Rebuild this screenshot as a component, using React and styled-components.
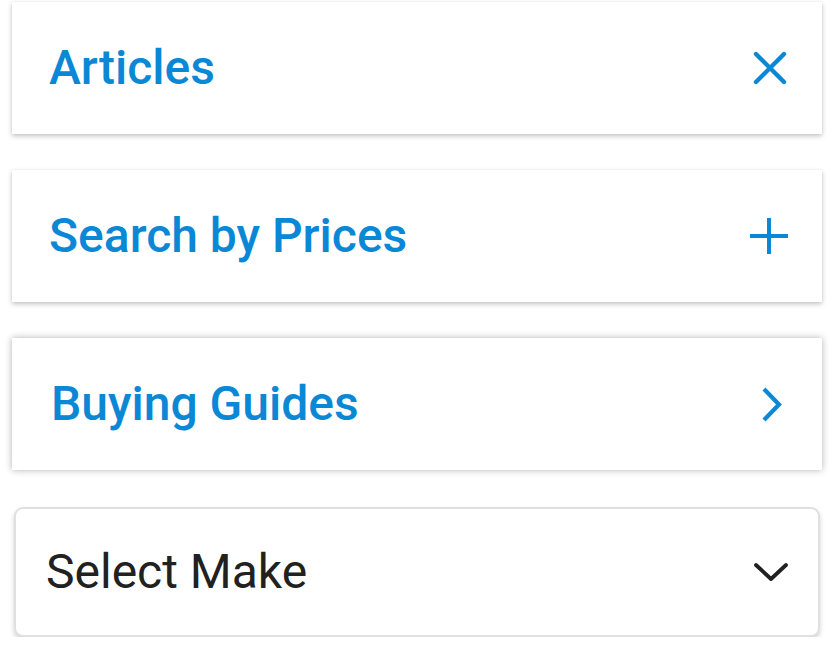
import React from "react";
import styled, { createGlobalStyle, css } from "styled-components";

const Global = createGlobalStyle`
  html, body { margin: 0; padding: 0; background: #ffffff; }
  body { font-family: Roboto, "Noto Sans", sans-serif; }
`;

const Stack = styled.div`
  display: flex;
  flex-direction: column;
  gap: 36px;
  padding: 2px 12px 0 12px;
  width: 810px;
`;

const Card = styled.div`
  box-sizing: border-box;
  height: 132px;
  display: flex;
  align-items: center;
  justify-content: space-between;
  background: #fff;
  padding: 0 ${(p) => p.$pr}px 0 ${(p) => p.$pl}px;
  ${(p) =>
    p.$variant === "raised" &&
    css`
      box-shadow: 0 0 7px rgba(0, 0, 0, 0.3);
    `}
  ${(p) =>
    p.$variant === "flat" &&
    css`
      box-shadow: 0 2px 5px rgba(0, 0, 0, 0.24), 0 0 2px rgba(0, 0, 0, 0.04);
    `}
  ${(p) =>
    p.$variant === "select" &&
    css`
      margin: 1px 2px 0;
      height: 130px;
      border: 2px solid #e0e0e0;
      border-radius: 9px;
      box-shadow: 0 3px 5px rgba(0, 0, 0, 0.18);
    `}
`;

const Title = styled.span`
  font-family: Roboto, "Noto Sans", sans-serif;
  font-size: 48px;
  font-weight: ${(p) => (p.$muted ? 400 : 500)};
  color: ${(p) => (p.$muted ? "#212121" : "#0a88d6")};
  line-height: 1;
`;

const Icon = styled.svg`
  display: block;
  flex: none;
`;

const CloseIcon = () => (
  <Icon width="34" height="34" viewBox="0 0 34 34">
    <path d="M3 3 L31 31 M31 3 L3 31" stroke="#0a88d6" strokeWidth="4.4" strokeLinecap="round" fill="none" />
  </Icon>
);

const PlusIcon = () => (
  <Icon width="40" height="38" viewBox="0 0 40 38">
    <path d="M20 1 V37 M1 19 H39" stroke="#0a88d6" strokeWidth="4" fill="none" />
  </Icon>
);

const ChevronRight = () => (
  <Icon width="22" height="35" viewBox="0 0 22 35">
    <path d="M3 2 L18 17.5 L3 33" stroke="#0a88d6" strokeWidth="4.2" fill="none" />
  </Icon>
);

const ChevronDown = () => (
  <Icon width="36" height="20" viewBox="0 0 36 20">
    <path d="M3 3 L18 17 L33 3" stroke="#212121" strokeWidth="3.8" strokeLinecap="round" strokeLinejoin="round" fill="none" />
  </Icon>
);

export default function App() {
  return (
    <>
      <Global />
      <Stack>
        <Card $variant="flat" $pl={37} $pr={35}>
          <Title>Articles</Title>
          <CloseIcon />
        </Card>
        <Card $variant="flat" $pl={37} $pr={33}>
          <Title>Search by Prices</Title>
          <PlusIcon />
        </Card>
        <Card $variant="raised" $pl={39} $pr={39}>
          <Title>Buying Guides</Title>
          <ChevronRight />
        </Card>
        <Card $variant="select" $pl={30} $pr={29}>
          <Title $muted>Select Make</Title>
          <ChevronDown />
        </Card>
      </Stack>
    </>
  );
}
